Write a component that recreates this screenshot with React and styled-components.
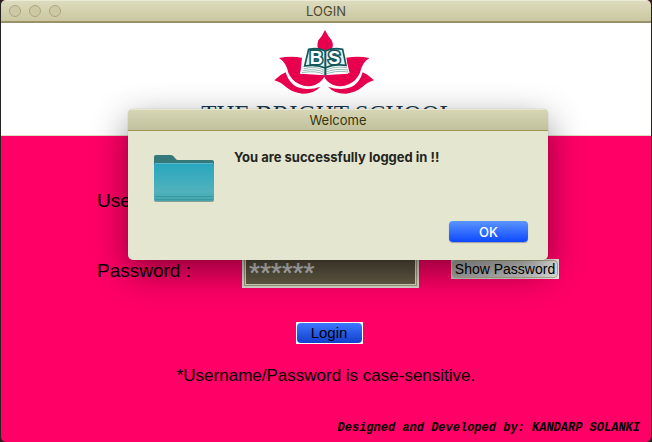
import React from "react";
import styled, { createGlobalStyle } from "styled-components";

const GlobalStyle = createGlobalStyle`
  * { box-sizing: border-box; }
  body {
    margin: 0;
    background: #26221f;
    font-family: "Liberation Sans", Arial, sans-serif;
    color: #000;
  }
  button, input { font-family: inherit; margin: 0; color: #000; }
`;

const Desktop = styled.div`
  min-height: 100vh;
  padding: 0 1px;
  display: flex;
  position: relative;
`;

const Window = styled.main`
  flex: 1;
  display: flex;
  flex-direction: column;
  border-radius: 5px;
  overflow: hidden;
  background: #ff0066;
`;

const TitleBar = styled.header`
  display: grid;
  grid-template-columns: 1fr auto 1fr;
  align-items: center;
  height: 23px;
  padding: 0 8px;
  border-top: 1px solid #ebebd6;
  border-bottom: 2px solid #98916a;
  background: linear-gradient(#dcdbbd, #cbc7a1);
`;

const Title = styled.h1`
  margin: 0;
  font: 400 13px/20px Inter, sans-serif;
  color: #4d4a35;
`;

const Controls = styled.div`
  display: flex;
  gap: 8px;
`;

const Dot = styled.button`
  width: 12px;
  height: 12px;
  padding: 0;
  border: 1px solid #aca680;
  border-radius: 50%;
  background: #cdc9a5;
`;

const Banner = styled.section`
  height: 113px;
  flex: none;
  overflow: hidden;
  display: flex;
  flex-direction: column;
  align-items: center;
  padding: 6px 4px 0 0;
  background: #fff;
  border-bottom: 1px solid #dedcc4;
`;

const SchoolName = styled.h2`
  margin: 6px 0 0;
  padding-left: 8px;
  font: 400 25px/28px "Liberation Serif", serif;
  color: #16384a;
  white-space: nowrap;
`;

const LoginForm = styled.form`
  flex: 1;
  display: flex;
  flex-direction: column;
  align-items: center;
  padding: 49px 11px 4px;
`;

const Fields = styled.div`
  display: grid;
  grid-template-columns: 145px 177px 140px;
  grid-auto-rows: 33px;
  row-gap: 37px;
  align-items: start;
  padding-left: 4px;
`;

const Label = styled.label`
  padding-top: 4px;
  font-size: 19px;
  line-height: 24px;
`;

const Field = styled.input`
  width: 100%;
  height: 33px;
  padding: 0 6px;
  border: 1px solid #dcdad2;
  outline: 0;
  box-shadow: inset 0 0 0 1px #d9d8cc, inset 0 0 0 2px #a19c7c, inset 0 0 0 3px #dcdbcb;
  background: linear-gradient(#504a38, #686049);
  color: #c6c6c6;
  font: 700 24px/28px Roboto, sans-serif;
`;

const FramedButton = styled.button`
  display: flex;
  padding: 1px;
  border: 0;
  background: #fff;
`;

const ShowButton = styled(FramedButton)`
  width: 108px;
  height: 20px;
  margin-top: 4px;
  justify-self: end;
  background: linear-gradient(90deg, #c8c8c6, #ecece8);
`;

const LoginButton = styled(FramedButton)`
  width: 67px;
  height: 22px;
  margin: 34px 0 0 6px;
`;

const ShowFace = styled.span`
  flex: 1;
  border: 1px solid #b3b08f;
  border-radius: 4px;
  background: linear-gradient(90deg, #aaa9a9, #e2e2e0);
  font-size: 14px;
  line-height: 16px;
  white-space: nowrap;
`;

const LoginFace = styled.span`
  flex: 1;
  border-radius: 4px;
  background: linear-gradient(#3d78ff, #1240cc);
  font-size: 15px;
  line-height: 20px;
`;

const Note = styled.p`
  margin: 21px 0 0;
  font-size: 17px;
  line-height: 22px;
`;

const Credit = styled.footer`
  margin-top: auto;
  align-self: flex-end;
  font: italic 700 12px/20px "Liberation Mono", monospace;
  white-space: nowrap;
`;

const Dialog = styled.section`
  position: absolute;
  top: 109px;
  left: 128px;
  width: 420px;
  border-radius: 5px;
  overflow: hidden;
  background: #e4e6d0;
  box-shadow: 0 0 1px rgba(0, 0, 0, 0.4), 0 12px 36px rgba(0, 0, 0, 0.45);
`;

const DialogTitle = styled.h2`
  margin: 0;
  height: 22px;
  border-top: 1px solid #e6e6cc;
  border-bottom: 1px solid #9b9550;
  background: linear-gradient(#d6d6b6, #c2c19d);
  font: 400 13px/21px Inter, sans-serif;
  color: #37350a;
  text-align: center;
`;

const DialogBody = styled.div`
  display: grid;
  grid-template-columns: 60px 1fr;
  grid-template-rows: 20px 75px;
  column-gap: 20px;
  padding: 16px 20px 18px 26px;
`;

const Message = styled.p`
  margin: 0;
  font: 700 13px/20px Inter, sans-serif;
  color: #24251f;
`;

const OkButton = styled.button`
  align-self: end;
  justify-self: end;
  width: 79px;
  height: 21px;
  padding: 0;
  border: 0;
  border-radius: 4px;
  background: linear-gradient(#5b95ff, #0d48ff);
  box-shadow: 0 1px 1px rgba(0, 0, 60, 0.3);
  color: #fff;
  font: 500 13px/20px Inter, sans-serif;
`;

const FolderIcon = styled.svg`
  grid-row: 1 / 3;
  margin-top: 7px;
`;

const Petals = () => (
  <>
    <path d="M42 108Q75 101 111 107L106 155L180 160Q170 182 150 189Q125 197 104 187Q80 176 70 152Q64 122 42 108Z" />
    <path d="M28 175Q44 158 62 151Q76 200 125 201Q146 202 166 194Q146 216 112 215Q84 212 63 195Q50 182 28 175Z" />
  </>
);

const Logo = () => (
  <svg width="100" height="66" viewBox="27 21 300 198" role="img" aria-label="The Bright School logo">
    <g fill="#e8004f">
      <path d="M180 24Q190 44 200 55Q209 72 196 90H163Q153 74 160 55Q172 42 180 24Z" />
      <Petals />
      <g transform="translate(355) scale(-1 1)">
        <Petals />
      </g>
    </g>
    <path d="M127 83L105 156Q145 146 180 160Q215 146 254 154L237 83Q205 75 182 86Q158 76 127 83Z" fill="#fff" />
    <path d="M131 82Q160 76 181 87Q204 76 233 82L243 130Q206 125 181 138Q156 126 119 132Z" fill="#e4f1ed" stroke="#14575b" strokeWidth="5" />
    <g fill="none" stroke="#5d9690" strokeWidth="2">
      <path d="M116 140Q154 131 179 146Q208 131 246 137" />
      <path d="M114 146Q154 138 179 152Q208 138 249 144" />
      <path d="M111 152Q154 144 179 158Q208 144 251 150" />
    </g>
    <path d="M181 84V160" stroke="#14575b" strokeWidth="6" />
    <g
      fill="#fff"
      stroke="#14575b"
      strokeWidth="10"
      paintOrder="stroke"
      fontFamily="Liberation Sans, sans-serif"
      fontWeight="700"
      fontSize="54"
      textAnchor="middle"
    >
      <text x="154" y="127">B</text>
      <text x="208" y="127">S</text>
    </g>
  </svg>
);

const Folder = () => (
  <FolderIcon width="60" height="49" viewBox="0 0 60 49" aria-hidden="true">
    <defs>
      <linearGradient id="front" x2="0" y2="1">
        <stop offset="0" stopColor="#28a6c0" />
        <stop offset="0.75" stopColor="#50b2bc" />
        <stop offset="1" stopColor="#43a5ad" />
      </linearGradient>
    </defs>
    <path d="M0 10V3Q0 1 2 1H17Q19 1 21 4Q22 6 24 6H58Q60 6 60 8V12H0Z" fill="#35797a" />
    <rect y="10" width="60" height="38" rx="2" fill="#8a9d93" />
    <rect y="9" width="60" height="38" rx="2" fill="url(#front)" />
    <path d="M1 42.5H59M1 45.5H59" stroke="#3a98a1" />
    <path d="M1 9.5H59" stroke="#58b8c8" />
  </FolderIcon>
);

export default function App() {
  return (
    <>
      <GlobalStyle />
      <Desktop>
        <Window>
          <TitleBar>
            <Controls>
              <Dot aria-label="Close" />
              <Dot aria-label="Minimize" />
              <Dot aria-label="Zoom" />
            </Controls>
            <Title>LOGIN</Title>
          </TitleBar>
          <Banner>
            <Logo />
            <SchoolName>THE BRIGHT SCHOOL</SchoolName>
          </Banner>
          <LoginForm onSubmit={(e) => e.preventDefault()}>
            <Fields>
              <Label htmlFor="username">Username :</Label>
              <Field id="username" />
              <span />
              <Label htmlFor="password">Password :</Label>
              <Field id="password" defaultValue="******" />
              <ShowButton type="button">
                <ShowFace>Show Password</ShowFace>
              </ShowButton>
            </Fields>
            <LoginButton type="submit">
              <LoginFace>Login</LoginFace>
            </LoginButton>
            <Note>*Username/Password is case-sensitive.</Note>
            <Credit>Designed and Developed by: KANDARP SOLANKI</Credit>
          </LoginForm>
        </Window>
        <Dialog role="dialog" aria-labelledby="dialog-title">
          <DialogTitle id="dialog-title">Welcome</DialogTitle>
          <DialogBody>
            <Folder />
            <Message>You are successfully logged in !!</Message>
            <OkButton type="button">OK</OkButton>
          </DialogBody>
        </Dialog>
      </Desktop>
    </>
  );
}
